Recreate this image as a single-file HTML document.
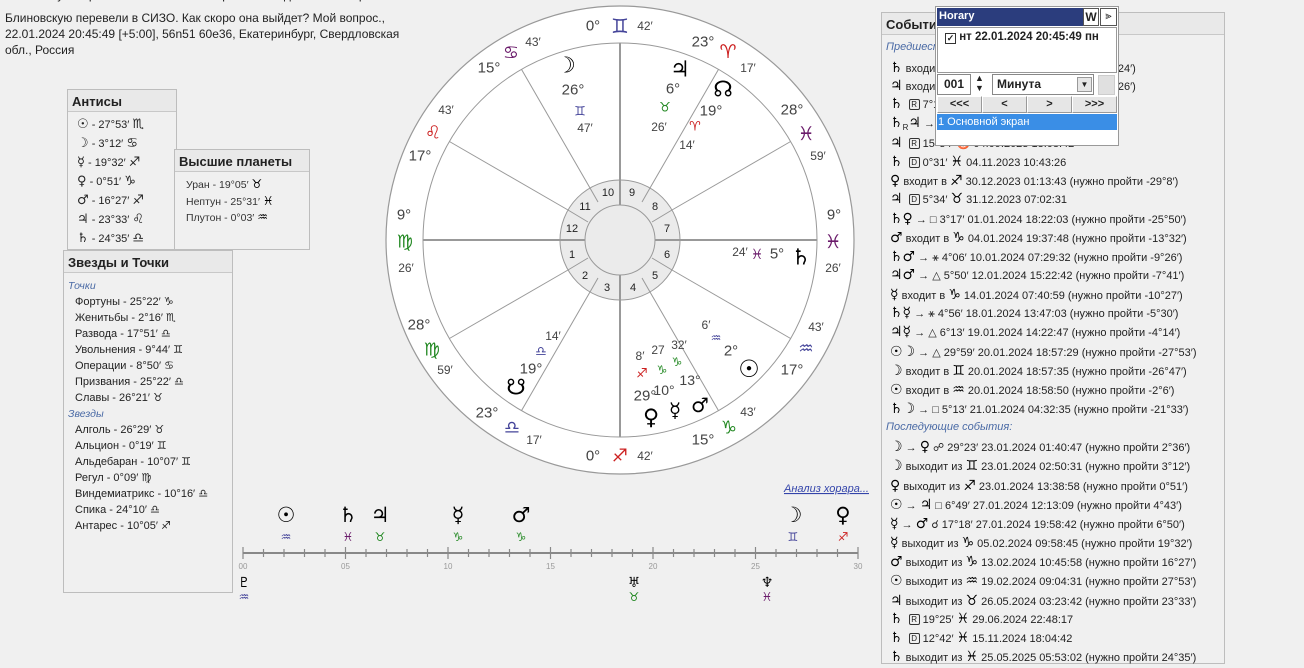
<!DOCTYPE html>
<html><head><meta charset="utf-8">
<style>
*{margin:0;padding:0;box-sizing:border-box}
body{width:1304px;height:668px;background:#f0f0f0;font-family:"Liberation Sans",Arial,sans-serif;color:#222;position:relative;overflow:hidden}
.a{position:absolute;white-space:nowrap}
.g{font-family:"DejaVu Sans",sans-serif}
.panel{position:absolute;border:1px solid #bdbdbd;background:#f0f0f0}
.ph{height:22px;border-bottom:1px solid #c8c8c8;background:#e9e9e9;font-weight:bold;font-size:13px;padding:4px 0 0 4px;color:#222}
.row{position:absolute;font-size:11px;white-space:nowrap;line-height:18px;color:#222}
.row .g{font-size:14px;color:#000;font-weight:bold}
.sub{position:absolute;font-size:11px;font-style:italic;color:#4a6aa5}
.rb{display:inline-block;border:1px solid #333;border-radius:2px;font-size:8px;line-height:9px;width:11px;text-align:center;vertical-align:1px;margin:0 3px}
.btn{position:absolute;top:96px;height:17px;background:#e6e6e6;border:1px solid #fff;border-right-color:#999;border-bottom-color:#999;font-size:11px;font-weight:bold;text-align:center;line-height:15px}
.an div{height:19px;line-height:19px;overflow:visible}
</style></head><body>

<div class="a" style="left:5px;top:-12px;font-size:12px;color:#222">Блиновскую перевели в СИЗО. Как скоро она выйдет? Мой вопрос.</div>
<div class="a" style="left:5px;top:10px;font-size:12px;line-height:16px;color:#222">Блиновскую перевели в СИЗО. Как скоро она выйдет? Мой вопрос.,<br>22.01.2024 20:45:49 [+5:00], 56n51 60e36, Екатеринбург, Свердловская<br>обл., Россия</div>

<!-- Антисы -->
<div class="panel" style="left:67px;top:89px;width:110px;height:161px">
<div class="ph">Антисы</div>
<div class="an" style="font-size:11px;padding:3px 0 0 9px">
<div><span class="g" style="font-size:13px">☉</span> - 27°53′ <span class="g" style="font-size:13px">♏</span></div>
<div><span class="g" style="font-size:13px">☽</span> - 3°12′ <span class="g" style="font-size:13px">♋</span></div>
<div><span class="g" style="font-size:13px">☿</span> - 19°32′ <span class="g" style="font-size:13px">♐</span></div>
<div><span class="g" style="font-size:13px">♀</span> - 0°51′ <span class="g" style="font-size:13px">♑</span></div>
<div><span class="g" style="font-size:13px">♂</span> - 16°27′ <span class="g" style="font-size:13px">♐</span></div>
<div><span class="g" style="font-size:13px">♃</span> - 23°33′ <span class="g" style="font-size:13px">♌</span></div>
<div><span class="g" style="font-size:13px">♄</span> - 24°35′ <span class="g" style="font-size:13px">♎</span></div>
</div></div>

<!-- Высшие планеты -->
<div class="panel" style="left:174px;top:149px;width:136px;height:101px">
<div class="ph">Высшие планеты</div>
<div style="font-size:10.5px;line-height:15.5px;padding:5px 0 0 11px;color:#333">
<div>Уран - 19°05′ <span class="g" style="font-size:12px;color:#000">♉</span></div>
<div>Нептун - 25°31′ <span class="g" style="font-size:12px;color:#000">♓</span></div>
<div>Плутон - 0°03′ <span class="g" style="font-size:12px;color:#000">♒</span></div>
</div></div>

<!-- Звезды и Точки -->
<div class="panel" style="left:63px;top:250px;width:170px;height:343px">
<div class="ph">Звезды и Точки</div>
<div style="font-size:11px;line-height:16px;padding:5px 0 0 4px">
<div style="font-style:italic;color:#4a6aa5;font-size:10.5px">Точки</div>
<div style="padding-left:7px">Фортуны - 25°22′ <span class="g">♑</span></div>
<div style="padding-left:7px">Женитьбы - 2°16′ <span class="g">♏</span></div>
<div style="padding-left:7px">Развода - 17°51′ <span class="g">♎</span></div>
<div style="padding-left:7px">Увольнения - 9°44′ <span class="g">♊</span></div>
<div style="padding-left:7px">Операции - 8°50′ <span class="g">♋</span></div>
<div style="padding-left:7px">Призвания - 25°22′ <span class="g">♎</span></div>
<div style="padding-left:7px">Славы - 26°21′ <span class="g">♉</span></div>
<div style="font-style:italic;color:#4a6aa5;font-size:10.5px">Звезды</div>
<div style="padding-left:7px">Алголь - 26°29′ <span class="g">♉</span></div>
<div style="padding-left:7px">Альцион - 0°19′ <span class="g">♊</span></div>
<div style="padding-left:7px">Альдебаран - 10°07′ <span class="g">♊</span></div>
<div style="padding-left:7px">Регул - 0°09′ <span class="g">♍</span></div>
<div style="padding-left:7px">Виндемиатрикс - 10°16′ <span class="g">♎</span></div>
<div style="padding-left:7px">Спика - 24°10′ <span class="g">♎</span></div>
<div style="padding-left:7px">Антарес - 10°05′ <span class="g">♐</span></div>
</div></div>

<!-- Wheel + timeline -->
<svg class="a" style="left:0;top:0" width="1304" height="668" font-family="Liberation Sans, Arial, sans-serif">
<circle cx="620" cy="240" r="234" fill="#fff" stroke="#999" stroke-width="1.2"/>
<circle cx="620" cy="240" r="197" fill="#fff" stroke="#999" stroke-width="1"/>
<circle cx="620" cy="240" r="60" fill="#ebebeb" stroke="#999"/>
<circle cx="620" cy="240" r="35" fill="#ebebeb" stroke="#999"/>
<g stroke="#999" stroke-width="1">
<line x1="672" y1="210" x2="790.6" y2="141.5"/><line x1="650" y1="188" x2="718.5" y2="69.4"/>
<line x1="590" y1="188" x2="521.5" y2="69.4"/><line x1="568" y1="210" x2="449.4" y2="141.5"/>
<line x1="568" y1="270" x2="449.4" y2="338.5"/><line x1="590" y1="292" x2="521.5" y2="410.6"/>
<line x1="650" y1="292" x2="718.5" y2="410.6"/><line x1="672" y1="270" x2="790.6" y2="338.5"/>
<line x1="598" y1="202" x2="590" y2="188"/><line x1="642" y1="202" x2="650" y2="188"/>
<line x1="652" y1="222" x2="672" y2="210"/><line x1="588" y1="222" x2="568" y2="210"/>
<line x1="652" y1="258" x2="672" y2="270"/><line x1="588" y1="258" x2="568" y2="270"/>
<line x1="598" y1="278" x2="590" y2="292"/><line x1="642" y1="278" x2="650" y2="292"/>
</g>
<g stroke="#999" stroke-width="2">
<line x1="620" y1="43" x2="620" y2="205"/><line x1="620" y1="275" x2="620" y2="437"/>
<line x1="423" y1="240" x2="585" y2="240"/><line x1="655" y1="240" x2="817" y2="240"/>
</g>
<g font-size="11" fill="#222" text-anchor="middle" dominant-baseline="central">
<text x="608" y="193">10</text><text x="632" y="193">9</text><text x="655" y="207">8</text><text x="667" y="229">7</text>
<text x="667" y="255">6</text><text x="655" y="276">5</text><text x="633" y="288">4</text><text x="607" y="288">3</text>
<text x="585" y="276">2</text><text x="572" y="255">1</text><text x="572" y="229">12</text><text x="585" y="207">11</text>
</g>
<g font-size="15" fill="#444" text-anchor="middle" dominant-baseline="central">
<text x="593" y="26">0°</text><text x="703" y="42">23°</text><text x="792" y="110">28°</text><text x="834" y="215">9°</text>
<text x="792" y="370">17°</text><text x="703" y="440">15°</text><text x="593" y="456">0°</text><text x="487" y="413">23°</text>
<text x="419" y="325">28°</text><text x="404" y="215">9°</text><text x="420" y="156">17°</text><text x="489" y="68">15°</text>
<text x="573" y="90">26°</text><text x="673" y="89">6°</text><text x="711" y="111">19°</text><text x="777" y="254">5°</text>
<text x="731" y="351">2°</text><text x="690" y="380" font-size="14">13°</text><text x="664" y="390" font-size="14">10°</text><text x="645" y="396">29°</text><text x="531" y="369">19°</text>
</g>
<g font-size="12" fill="#444" text-anchor="middle" dominant-baseline="central">
<text x="645" y="26">42′</text><text x="748" y="68">17′</text><text x="818" y="156">59′</text><text x="833" y="268">26′</text>
<text x="816" y="327">43′</text><text x="748" y="412">43′</text><text x="645" y="456">42′</text><text x="534" y="440">17′</text>
<text x="445" y="370">59′</text><text x="406" y="268">26′</text><text x="446" y="110">43′</text><text x="533" y="42">43′</text>
<text x="585" y="128">47′</text><text x="659" y="127">26′</text><text x="687" y="145">14′</text><text x="740" y="252">24′</text>
<text x="706" y="325">6′</text><text x="679" y="345">32′</text><text x="658" y="350">27</text><text x="640" y="356">8′</text><text x="553" y="336">14′</text>
</g>
<g font-family="DejaVu Sans, sans-serif" text-anchor="middle" dominant-baseline="central" font-weight="bold">
<text x="620" y="26" font-size="20" fill="#444499">♊</text><text x="728" y="52" font-size="19" fill="#cc2020">♈</text>
<text x="806" y="134" font-size="19" fill="#6a1a6a">♓</text><text x="833" y="242" font-size="19" fill="#6a1a6a">♓</text>
<text x="806" y="349" font-size="17" fill="#444499">♒</text><text x="729" y="428" font-size="18" fill="#228822">♑</text>
<text x="620" y="456" font-size="18" fill="#cc2020">♐</text><text x="512" y="428" font-size="18" fill="#444499">♎</text>
<text x="432" y="350" font-size="18" fill="#228822">♍</text><text x="405" y="242" font-size="18" fill="#228822">♍</text>
<text x="433" y="133" font-size="18" fill="#cc2020">♌</text><text x="511" y="53" font-size="18" fill="#6a1a6a">♋</text>
<text x="580" y="112" font-size="13" fill="#444499">♊</text><text x="665" y="108" font-size="13" fill="#228822">♉</text>
<text x="695" y="127" font-size="13" fill="#cc2020">♈</text><text x="757" y="255" font-size="14" fill="#6a1a6a">♓</text>
<text x="716" y="338" font-size="12" fill="#444499">♒</text><text x="677" y="362" font-size="12" fill="#228822">♑</text>
<text x="662" y="370" font-size="12" fill="#228822">♑</text><text x="642" y="374" font-size="13" fill="#cc2020">♐</text>
<text x="541" y="352" font-size="13" fill="#444499">♎</text>
</g>
<g font-family="DejaVu Sans, sans-serif" text-anchor="middle" dominant-baseline="central" fill="#000" font-weight="bold">
<text x="566" y="66" font-size="22">☽</text><text x="680" y="70" font-size="22">♃</text><text x="723" y="90" font-size="22">☊</text>
<text x="801" y="258" font-size="22">♄</text><text x="749" y="369" font-size="24">☉</text><text x="700" y="405" font-size="20">♂</text>
<text x="675" y="410" font-size="20">☿</text><text x="651" y="418" font-size="22">♀</text><text x="516" y="388" font-size="22">☋</text>
</g>
<!-- timeline -->
<line x1="243" y1="553" x2="858" y2="553" stroke="#888" stroke-width="2"/>
<g stroke="#888" stroke-width="1.2">
<line x1="243" y1="547" x2="243" y2="559"/><line x1="263.5" y1="549" x2="263.5" y2="557"/><line x1="284" y1="549" x2="284" y2="557"/><line x1="304.5" y1="549" x2="304.5" y2="557"/><line x1="325" y1="549" x2="325" y2="557"/><line x1="345.5" y1="547" x2="345.5" y2="559"/><line x1="366" y1="549" x2="366" y2="557"/><line x1="386.5" y1="549" x2="386.5" y2="557"/><line x1="407" y1="549" x2="407" y2="557"/><line x1="427.5" y1="549" x2="427.5" y2="557"/><line x1="448" y1="547" x2="448" y2="559"/><line x1="468.5" y1="549" x2="468.5" y2="557"/><line x1="489" y1="549" x2="489" y2="557"/><line x1="509.5" y1="549" x2="509.5" y2="557"/><line x1="530" y1="549" x2="530" y2="557"/><line x1="550.5" y1="547" x2="550.5" y2="559"/><line x1="571" y1="549" x2="571" y2="557"/><line x1="591.5" y1="549" x2="591.5" y2="557"/><line x1="612" y1="549" x2="612" y2="557"/><line x1="632.5" y1="549" x2="632.5" y2="557"/><line x1="653" y1="547" x2="653" y2="559"/><line x1="673.5" y1="549" x2="673.5" y2="557"/><line x1="694" y1="549" x2="694" y2="557"/><line x1="714.5" y1="549" x2="714.5" y2="557"/><line x1="735" y1="549" x2="735" y2="557"/><line x1="755.5" y1="547" x2="755.5" y2="559"/><line x1="776" y1="549" x2="776" y2="557"/><line x1="796.5" y1="549" x2="796.5" y2="557"/><line x1="817" y1="549" x2="817" y2="557"/><line x1="837.5" y1="549" x2="837.5" y2="557"/><line x1="858" y1="547" x2="858" y2="559"/>
</g>
<g font-size="8" fill="#999" text-anchor="middle"><text x="243" y="569">00</text><text x="345.5" y="569">05</text><text x="448" y="569">10</text><text x="550.5" y="569">15</text><text x="653" y="569">20</text><text x="755.5" y="569">25</text><text x="858" y="569">30</text></g>
<g font-family="DejaVu Sans, sans-serif" text-anchor="middle" dominant-baseline="central" fill="#000" font-size="21" font-weight="bold">
<text x="286" y="515">☉</text><text x="348" y="515">♄</text><text x="380" y="515">♃</text><text x="458" y="515">☿</text><text x="521" y="515">♂</text><text x="793" y="515">☽</text><text x="843" y="515">♀</text>
<text x="244" y="583" font-size="14">♇</text><text x="634" y="583" font-size="14">♅</text><text x="767" y="583" font-size="14">♆</text>
</g>
<g font-family="DejaVu Sans, sans-serif" text-anchor="middle" dominant-baseline="central" font-size="12">
<text x="286" y="537" fill="#444499">♒</text><text x="348" y="537" fill="#6a1a6a">♓</text><text x="380" y="537" fill="#228822">♉</text><text x="458" y="537" fill="#228822">♑</text><text x="521" y="537" fill="#228822">♑</text><text x="793" y="537" fill="#444499">♊</text><text x="843" y="537" fill="#cc2020">♐</text>
<text x="244" y="597" fill="#444499">♒</text><text x="634" y="597" fill="#228822">♉</text><text x="767" y="597" fill="#6a1a6a">♓</text>
</g>
<text x="869" y="492" font-size="11" font-style="italic" fill="#3344aa" text-anchor="end" text-decoration="underline">Анализ хорара...</text>
</svg>

<!-- Events panel -->
<div class="panel" style="left:881px;top:12px;width:344px;height:652px">
<div class="ph">События...</div></div>
<div class="sub" style="left:886px;top:41px">Предшествующие события:</div>
<div class="row" style="left:890px;top:59px"><span class="g">♄</span> входит в ♉ 07.03.2023 (нужно пройти -5°24′)</div>
<div class="row" style="left:890px;top:77px"><span class="g">♃</span> входит в ♉ 16.05.2023 (нужно пройти -6°26′)</div>
<div class="row" style="left:890px;top:95px"><span class="g">♄</span> <span class="rb">R</span>7°13′ ♓ 17.06.2023</div>
<div class="row" style="left:890px;top:114px"><span class="g">♄</span><sub style="font-size:8px">R</sub><span class="g">♃</span> → ⚹ 13.08.2023 (нужно пройти -1°48′)</div>
<div class="row" style="left:890px;top:134px"><span class="g">♃</span> <span class="rb">R</span>15°34′ ♉ 04.09.2023 13:08:42</div>
<div class="row" style="left:890px;top:153px"><span class="g">♄</span> <span class="rb">D</span>0°31′ <span class="g">♓</span> 04.11.2023 10:43:26</div>
<div class="row" style="left:890px;top:172px"><span class="g">♀</span> входит в <span class="g">♐</span> 30.12.2023 01:13:43 (нужно пройти -29°8′)</div>
<div class="row" style="left:890px;top:190px"><span class="g">♃</span> <span class="rb">D</span>5°34′ <span class="g">♉</span> 31.12.2023 07:02:31</div>
<div class="row" style="left:890px;top:210px"><span class="g">♄♀</span> → □ 3°17′ 01.01.2024 18:22:03 (нужно пройти -25°50′)</div>
<div class="row" style="left:890px;top:229px"><span class="g">♂</span> входит в <span class="g">♑</span> 04.01.2024 19:37:48 (нужно пройти -13°32′)</div>
<div class="row" style="left:890px;top:248px"><span class="g">♄♂</span> → ⚹ 4°06′ 10.01.2024 07:29:32 (нужно пройти -9°26′)</div>
<div class="row" style="left:890px;top:266px"><span class="g">♃♂</span> → △ 5°50′ 12.01.2024 15:22:42 (нужно пройти -7°41′)</div>
<div class="row" style="left:890px;top:286px"><span class="g">☿</span> входит в <span class="g">♑</span> 14.01.2024 07:40:59 (нужно пройти -10°27′)</div>
<div class="row" style="left:890px;top:304px"><span class="g">♄☿</span> → ⚹ 4°56′ 18.01.2024 13:47:03 (нужно пройти -5°30′)</div>
<div class="row" style="left:890px;top:323px"><span class="g">♃☿</span> → △ 6°13′ 19.01.2024 14:22:47 (нужно пройти -4°14′)</div>
<div class="row" style="left:890px;top:343px"><span class="g">☉☽</span> → △ 29°59′ 20.01.2024 18:57:29 (нужно пройти -27°53′)</div>
<div class="row" style="left:890px;top:362px"><span class="g">☽</span> входит в <span class="g">♊</span> 20.01.2024 18:57:35 (нужно пройти -26°47′)</div>
<div class="row" style="left:890px;top:381px"><span class="g">☉</span> входит в <span class="g">♒</span> 20.01.2024 18:58:50 (нужно пройти -2°6′)</div>
<div class="row" style="left:890px;top:400px"><span class="g">♄☽</span> → □ 5°13′ 21.01.2024 04:32:35 (нужно пройти -21°33′)</div>
<div class="sub" style="left:886px;top:421px">Последующие события:</div>
<div class="row" style="left:890px;top:438px"><span class="g">☽</span> → <span class="g">♀</span> ☍ 29°23′ 23.01.2024 01:40:47 (нужно пройти 2°36′)</div>
<div class="row" style="left:890px;top:457px"><span class="g">☽</span> выходит из <span class="g">♊</span> 23.01.2024 02:50:31 (нужно пройти 3°12′)</div>
<div class="row" style="left:890px;top:477px"><span class="g">♀</span> выходит из <span class="g">♐</span> 23.01.2024 13:38:58 (нужно пройти 0°51′)</div>
<div class="row" style="left:890px;top:496px"><span class="g">☉</span> → <span class="g">♃</span> □ 6°49′ 27.01.2024 12:13:09 (нужно пройти 4°43′)</div>
<div class="row" style="left:890px;top:515px"><span class="g">☿</span> → <span class="g">♂</span> ☌ 17°18′ 27.01.2024 19:58:42 (нужно пройти 6°50′)</div>
<div class="row" style="left:890px;top:534px"><span class="g">☿</span> выходит из <span class="g">♑</span> 05.02.2024 09:58:45 (нужно пройти 19°32′)</div>
<div class="row" style="left:890px;top:553px"><span class="g">♂</span> выходит из <span class="g">♑</span> 13.02.2024 10:45:58 (нужно пройти 16°27′)</div>
<div class="row" style="left:890px;top:572px"><span class="g">☉</span> выходит из <span class="g">♒</span> 19.02.2024 09:04:31 (нужно пройти 27°53′)</div>
<div class="row" style="left:890px;top:592px"><span class="g">♃</span> выходит из <span class="g">♉</span> 26.05.2024 03:23:42 (нужно пройти 23°33′)</div>
<div class="row" style="left:890px;top:610px"><span class="g">♄</span> <span class="rb">R</span>19°25′ <span class="g">♓</span> 29.06.2024 22:48:17</div>
<div class="row" style="left:890px;top:629px"><span class="g">♄</span> <span class="rb">D</span>12°42′ <span class="g">♓</span> 15.11.2024 18:04:42</div>
<div class="row" style="left:890px;top:648px"><span class="g">♄</span> выходит из <span class="g">♓</span> 25.05.2025 05:53:02 (нужно пройти 24°35′)</div>

<!-- Horary popup -->
<div class="a" style="left:935px;top:6px;width:184px;height:140px;background:#fff;border:1px solid #999"></div>
<div class="a" style="left:937px;top:8px;width:146px;height:18px;background:#2b3d7d;color:#fff;font-size:11px;font-weight:bold;padding:2px 0 0 2px">Horary</div>
<div class="a" style="left:1083px;top:8px;width:16px;height:18px;background:#fff;border:1px solid #555;font-size:12px;font-weight:bold;text-align:center;line-height:16px">W</div>
<div class="a" style="left:1100px;top:8px;width:17px;height:18px;background:#fff;border:1px solid #555;font-size:11px;text-align:center;line-height:15px">⫸</div>
<div class="a" style="left:937px;top:27px;width:180px;height:46px;border:1px solid #999"></div>
<div class="a" style="left:945px;top:29px;font-size:11.5px;font-weight:bold;line-height:16px"><span style="display:inline-block;width:11px;height:11px;border:1px solid #333;font-size:9px;line-height:9px;text-align:center;vertical-align:-1px">✓</span> нт 22.01.2024 20:45:49 пн</div>
<div class="a" style="left:937px;top:74px;width:34px;height:21px;border:1px solid #888;background:#fff;font-size:12px;font-weight:bold;text-align:center;line-height:19px">001</div>
<div class="a" style="left:975px;top:73px;font-size:9px;line-height:10px">▲<br>▼</div>
<div class="a" style="left:992px;top:74px;width:102px;height:21px;border:1px solid #888;background:#fff;font-size:12px;font-weight:bold;padding-left:4px;line-height:19px">Минута</div>
<div class="a" style="left:1077px;top:77px;width:15px;height:15px;background:#e6e6e6;border:1px solid #999;font-size:8px;text-align:center;line-height:13px">▼</div>
<div class="a" style="left:1098px;top:75px;width:17px;height:20px;background:#e0e0e0;border:1px solid #ccc"></div>
<div class="btn" style="left:937px;width:45px">&lt;&lt;&lt;</div>
<div class="btn" style="left:982px;width:45px">&lt;</div>
<div class="btn" style="left:1027px;width:45px">&gt;</div>
<div class="btn" style="left:1072px;width:45px">&gt;&gt;&gt;</div>
<div class="a" style="left:937px;top:114px;width:180px;height:16px;background:#3a8ee6;color:#fff;font-size:11px;line-height:16px;padding-left:1px">1 Основной экран</div>
</body></html>
